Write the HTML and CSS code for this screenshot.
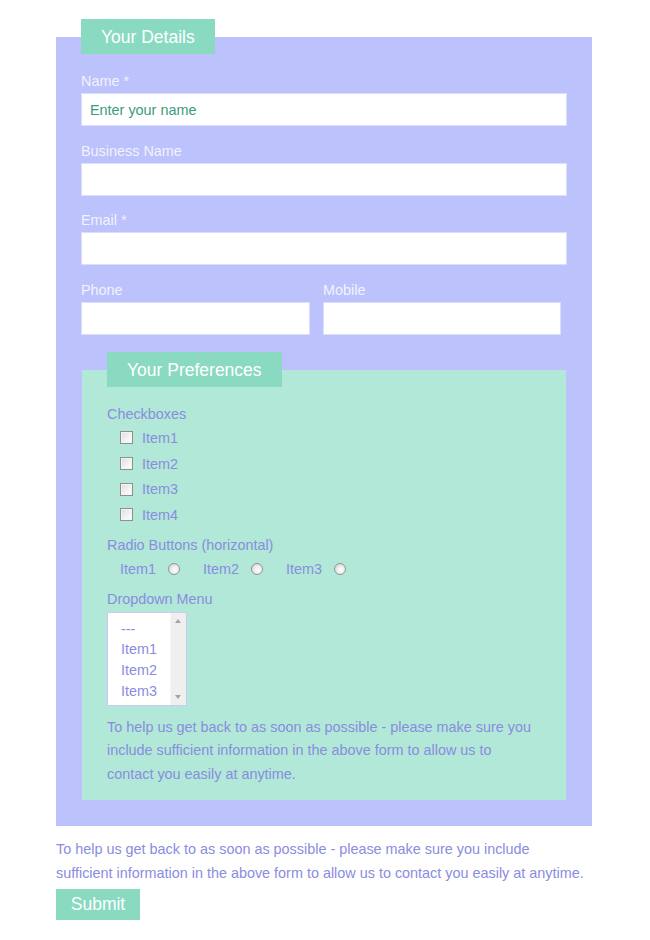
FILE: index.html
```html
<!DOCTYPE html>
<html lang="en">
<head>
<meta charset="utf-8">
<title>Contact Form</title>
<link rel="stylesheet" href="styles.css">
</head>
<body>
<form class="form">
  <fieldset class="details">
    <legend class="legend">Your Details</legend>
    <div class="field">
      <label class="label" for="name">Name *</label>
      <input class="input" id="name" type="text" placeholder="Enter your name">
    </div>
    <div class="field">
      <label class="label" for="business">Business Name</label>
      <input class="input" id="business" type="text">
    </div>
    <div class="field">
      <label class="label" for="email">Email *</label>
      <input class="input" id="email" type="text">
    </div>
    <div class="field-row">
      <div class="field">
        <label class="label" for="phone">Phone</label>
        <input class="input" id="phone" type="text">
      </div>
      <div class="field">
        <label class="label" for="mobile">Mobile</label>
        <input class="input" id="mobile" type="text">
      </div>
    </div>

    <fieldset class="prefs">
      <legend class="legend">Your Preferences</legend>
      <div class="group-label">Checkboxes</div>
      <ul class="checks">
        <li class="check"><input class="box" type="checkbox" id="c1"><label for="c1">Item1</label></li>
        <li class="check"><input class="box" type="checkbox" id="c2"><label for="c2">Item2</label></li>
        <li class="check"><input class="box" type="checkbox" id="c3"><label for="c3">Item3</label></li>
        <li class="check"><input class="box" type="checkbox" id="c4"><label for="c4">Item4</label></li>
      </ul>
      <div class="group-label radios-label">Radio Buttons (horizontal)</div>
      <div class="radios">
        <label class="radio-item">Item1 <input class="radio" type="radio" name="r"></label>
        <label class="radio-item">Item2 <input class="radio" type="radio" name="r"></label>
        <label class="radio-item">Item3 <input class="radio" type="radio" name="r"></label>
      </div>
      <div class="group-label dropdown-label">Dropdown Menu</div>
      <div class="listbox" role="listbox">
        <div class="options">
          <div class="option" role="option">---</div>
          <div class="option" role="option">Item1</div>
          <div class="option" role="option">Item2</div>
          <div class="option" role="option">Item3</div>
        </div>
        <div class="scrollbar">
          <span class="arrow up"></span>
          <span class="arrow down"></span>
        </div>
      </div>
      <p class="note">To help us get back to as soon as possible - please make sure you include sufficient information in the above form to allow us to contact you easily at anytime.</p>
    </fieldset>
  </fieldset>
  <p class="note outer-note">To help us get back to as soon as possible - please make sure you include sufficient information in the above form to allow us to contact you easily at anytime.</p>
  <button class="submit" type="button">Submit</button>
</form>
</body>
</html>
```
FILE: styles.css
```css
* { box-sizing: border-box; }
body {
  margin: 0;
  background: #ffffff;
  font-family: "Liberation Sans", Arial, sans-serif;
  font-size: 14.4px;
}
.form {
  width: 536px;
  margin: 0 0 0 56px;
  padding-top: 19px;
}
.details {
  margin: 0;
  border: none;
  background: #bcc2fb;
  padding: 18px 25px 26px;
  min-width: 0;
}
.legend {
  background: #8ad9c1;
  color: #ffffff;
  font-size: 17.5px;
  line-height: 21px;
  padding: 8px 20px 6px;
  margin: 0;
}
.field {
  margin-bottom: 15.5px;
}
.label {
  display: block;
  color: #f2f2ff;
  line-height: 18px;
  margin-bottom: 3px;
}
.input {
  display: block;
  width: 100%;
  height: 33px;
  margin: 0;
  border: 1px solid #dcdcfd;
  background: #ffffff;
  padding: 0 8px;
  font-family: inherit;
  font-size: 14.4px;
  color: #3e9a7d;
  outline: none;
}
.input::placeholder { color: #3e9a7d; opacity: 1; }
.field-row {
  display: grid;
  grid-template-columns: 229px 238px;
  column-gap: 13px;
}
.prefs {
  margin: 2px 0 0 1px;
  width: 484px;
  border: none;
  background: #b1e8d7;
  padding: 18px 25px 14px;
  min-width: 0;
  color: #8a8ce0;
}
.group-label {
  line-height: 18px;
  color: #8a8ce0;
}
.checks {
  list-style: none;
  margin: 2px 0 0;
  padding: 0;
}
.check {
  display: flex;
  align-items: center;
  height: 25.7px;
  padding-left: 13px;
}
.box {
  appearance: none;
  -webkit-appearance: none;
  width: 13px;
  height: 13px;
  margin: 0 9px 0 0;
  border: 1px solid #8f8f8f;
  background: linear-gradient(135deg, #dcdcdc 0%, #f4f4f4 60%, #ffffff 100%);
  box-shadow: inset 0 0 0 1px #f4f4f4;
}
.radios-label { margin-top: 8px; }
.radios {
  display: flex;
  align-items: center;
  height: 24px;
  margin-top: 3px;
  padding-left: 13px;
  gap: 23px;
}
.radio-item {
  display: flex;
  align-items: center;
  gap: 12px;
  white-space: nowrap;
}
.radio-item .radio { margin: 0; }
.radio {
  appearance: none;
  -webkit-appearance: none;
  width: 12px;
  height: 12px;
  border-radius: 50%;
  border: 1px solid #959595;
  background: radial-gradient(circle at 60% 60%, #ffffff 0%, #ececec 45%, #c9c9c9 100%);
}
.dropdown-label { margin-top: 9px; }
.listbox {
  display: flex;
  width: 80px;
  height: 94px;
  margin-top: 4px;
  border: 1px solid #cbc8f8;
  background: #ffffff;
}
.options {
  flex: 1;
  padding: 6px 0 0 13px;
  overflow: hidden;
}
.option {
  line-height: 20.7px;
  color: #8a8ce0;
  white-space: nowrap;
}
.scrollbar {
  position: relative;
  width: 16px;
  background: #efefef;
  border-left: 1px solid #f6f6f6;
}
.arrow {
  position: absolute;
  left: 4px;
  width: 0;
  height: 0;
  border-left: 3.5px solid transparent;
  border-right: 3.5px solid transparent;
}
.arrow.up { top: 6px; border-bottom: 4px solid #a3a3a3; }
.arrow.down { bottom: 6px; border-top: 4px solid #a3a3a3; }
.note {
  margin: 10px 0 0;
  line-height: 23.5px;
  color: #8a8ce0;
}
.outer-note {
  width: 531px;
  margin-top: 11px;
  line-height: 24px;
}
.submit {
  display: block;
  margin-top: 4px;
  width: 84px;
  height: 31px;
  border: none;
  background: #8ad9c1;
  color: #ffffff;
  font-family: inherit;
  font-size: 17.5px;
  padding: 0;
}
```
